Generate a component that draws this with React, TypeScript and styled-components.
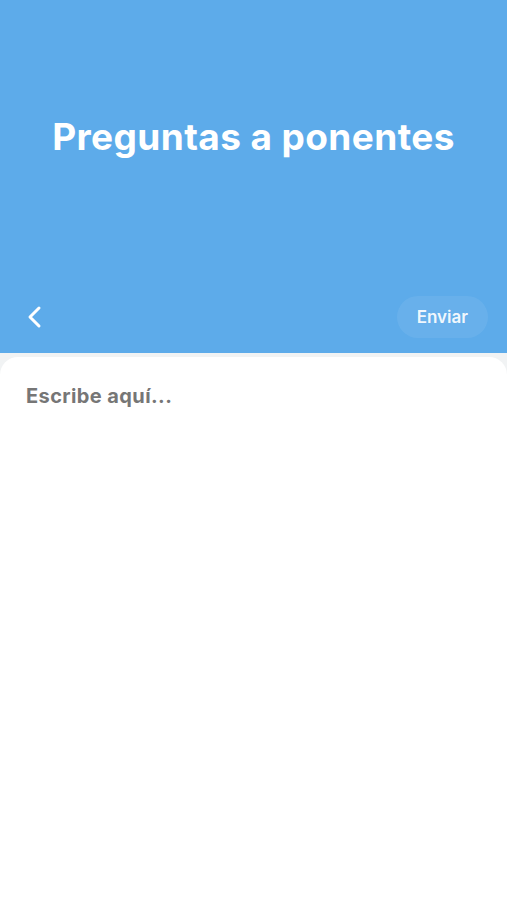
import React from 'react';
import styled, { createGlobalStyle } from 'styled-components';

const GlobalStyle = createGlobalStyle`
  html, body {
    margin: 0;
    padding: 0;
    background: #ffffff;
    font-family: Inter, "Noto Sans", sans-serif;
  }
`;

const Page = styled.div`
  width: 507px;
  height: 900px;
  display: flex;
  flex-direction: column;
  background: #f1f3f4;
  overflow: hidden;
`;

const Header = styled.header`
  height: 353px;
  background: #5dabea;
  display: flex;
  flex-direction: column;
  box-sizing: border-box;
  padding: 0 19px 15px 19px;
`;

const TitleArea = styled.div`
  flex: 1;
  display: flex;
  align-items: center;
  justify-content: center;
  padding-bottom: 24px;
`;

const Title = styled.h1`
  margin: 0;
  font-size: 37px;
  font-weight: 700;
  color: #ffffff;
  letter-spacing: 0.4px;
`;

const NavRow = styled.div`
  display: flex;
  align-items: center;
  justify-content: space-between;
  height: 42px;
`;

const BackButton = styled.button`
  border: none;
  background: transparent;
  padding: 0 0 0 7px;
  width: 30px;
  height: 30px;
  display: flex;
  align-items: center;
  justify-content: flex-start;
  cursor: pointer;
`;

const SendButton = styled.button`
  border: none;
  height: 42px;
  padding: 0 20px;
  border-radius: 21px;
  background: rgba(255, 255, 255, 0.07);
  color: rgba(255, 255, 255, 0.92);
  font-family: Inter, "Noto Sans", sans-serif;
  font-size: 17px;
  font-weight: 600;
  cursor: pointer;
`;

const Card = styled.main`
  flex: 1;
  margin-top: 4px;
  background: #ffffff;
  border-radius: 18px 18px 0 0;
  padding: 27px 26px;
`;

const Placeholder = styled.div`
  font-size: 20px;
  font-weight: 700;
  color: #767676;
  letter-spacing: 0.4px;
`;

const App: React.FC = () => (
  <>
    <GlobalStyle />
    <Page>
      <Header>
        <TitleArea>
          <Title>Preguntas a ponentes</Title>
        </TitleArea>
        <NavRow>
          <BackButton aria-label="Atrás">
            <svg width="16" height="24" viewBox="0 0 16 24" fill="none">
              <path d="M13 3 L4 12 L13 21" stroke="#ffffff" strokeWidth="3" strokeLinecap="round" strokeLinejoin="round" />
            </svg>
          </BackButton>
          <SendButton>Enviar</SendButton>
        </NavRow>
      </Header>
      <Card>
        <Placeholder>Escribe aquí...</Placeholder>
      </Card>
    </Page>
  </>
);

export default App;
